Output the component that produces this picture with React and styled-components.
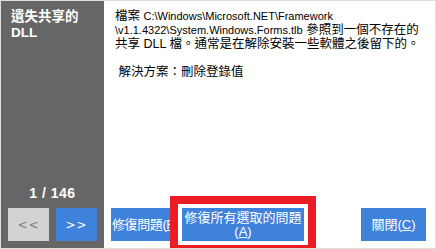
import React from "react";
import styled, { createGlobalStyle } from "styled-components";

const Global = createGlobalStyle`
  html, body { margin: 0; padding: 0; background: #fff; }
  body { font-family: "Liberation Sans", "Noto Sans CJK TC", sans-serif; }
`;

const Window = styled.div`
  width: 436px;
  height: 249px;
  box-sizing: border-box;
  border: 1px solid #dedede;
  display: flex;
  overflow: hidden;
  background: #fff;
`;

const Side = styled.div`
  width: 103px;
  flex: none;
  background: #666666;
  display: flex;
  flex-direction: column;
  padding: 8px 0 7px 7px;
  box-sizing: border-box;
`;

const Title = styled.div`
  color: #fff;
  font-weight: bold;
  font-size: 13.5px;
  line-height: 16px;
  padding-left: 3px;
`;

const Counter = styled.div`
  margin-top: auto;
  color: #fff;
  font-weight: bold;
  font-size: 14px;
  letter-spacing: 0.5px;
  line-height: 14px;
  text-align: center;
  padding-right: 7px;
  margin-bottom: 8px;
`;

const NavRow = styled.div`
  display: flex;
  gap: 7px;
`;

const NavButton = styled.div`
  width: 41px;
  height: 33px;
  display: flex;
  align-items: center;
  justify-content: center;
  font-size: 12px;
  font-family: "DejaVu Sans", sans-serif;
  letter-spacing: 1px;
  background: ${(p) => (p.$disabled ? "#d3d3d3" : "#3f82db")};
  color: ${(p) => (p.$disabled ? "#7a7f8c" : "#fff")};
`;

const Main = styled.div`
  flex: 1;
  display: flex;
  flex-direction: column;
  padding: 8px 9px 7px 7px;
  min-width: 0;
`;

const Message = styled.div`
  padding-left: 4px;
  font-size: 12.5px;
  line-height: 14px;
  color: #000;
  white-space: nowrap;
`;

const Line = styled.div``;

const Path = styled.span`
  font-size: 11px;
`;

const Gap = styled.div`
  height: 14px;
`;

const ButtonRow = styled.div`
  margin-top: auto;
  display: flex;
  align-items: flex-end;
  position: relative;
`;

const ActionButton = styled.div`
  width: ${(p) => p.$w}px;
  height: 33px;
  flex: none;
  box-sizing: border-box;
  background: #3f82db;
  color: #fff;
  font-size: 13px;
  line-height: 14px;
  display: flex;
  flex-direction: column;
  align-items: ${(p) => (p.$clip ? "flex-start" : "center")};
  justify-content: center;
  padding-left: ${(p) => (p.$clip ? "1px" : "0")};
  letter-spacing: ${(p) => (p.$clip ? "-0.4px" : "0")};
  white-space: nowrap;
  overflow: hidden;
  text-align: center;
  margin-left: ${(p) => p.$ml || 0}px;
`;

const Highlighted = styled(ActionButton)`
  overflow: visible;
  box-shadow: 0 0 0 4px #fff, 0 0 0 12px #ec1c24;
  position: relative;
  z-index: 1;
`;

const Key = styled.span`
  text-decoration: underline;
`;

const Spacer = styled.div`
  flex: 1;
`;

export default function App() {
  return (
    <>
      <Global />
      <Window>
        <Side>
          <Title>
            遺失共享的
            <br />
            DLL
          </Title>
          <Counter>1 / 146</Counter>
          <NavRow>
            <NavButton $disabled>&lt;&lt;</NavButton>
            <NavButton>&gt;&gt;</NavButton>
          </NavRow>
        </Side>
        <Main>
          <Message>
            <Line>
              檔案 <Path>C:\Windows\Microsoft.NET\Framework</Path>
            </Line>
            <Line>
              <Path>\v1.1.4322\System.Windows.Forms.tlb</Path> 參照到一個不存在的
            </Line>
            <Line>共享 DLL 檔。通常是在解除安裝一些軟體之後留下的。</Line>
            <Gap />
            <Line>&nbsp;解決方案：刪除登錄值</Line>
          </Message>
          <ButtonRow>
            <ActionButton $w={66} $clip>
              <span>
                修復問題(<Key>F</Key>)
              </span>
            </ActionButton>
            <Highlighted $w={122} $ml={5}>
              <span>修復所有選取的問題</span>
              <span>
                (<Key>A</Key>)
              </span>
            </Highlighted>
            <Spacer />
            <ActionButton $w={65}>
              <span>
                關閉(<Key>C</Key>)
              </span>
            </ActionButton>
          </ButtonRow>
        </Main>
      </Window>
    </>
  );
}
